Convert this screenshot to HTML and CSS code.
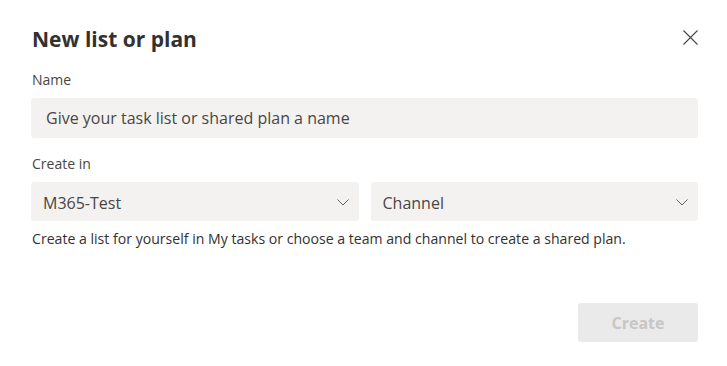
FILE: index.html
```html
<!DOCTYPE html>
<html lang="en">
<head>
<meta charset="utf-8">
<title>New list or plan</title>
<link rel="stylesheet" href="styles.css">
</head>
<body>
<div class="dialog">
  <div class="header">
    <h1 class="title">New list or plan</h1>
    <button class="close" aria-label="Close">
      <svg width="15" height="15" viewBox="0 0 15 15"><path d="M0.5 0.5 L14.5 14.5 M14.5 0.5 L0.5 14.5" stroke="#484644" stroke-width="1.1" fill="none"/></svg>
    </button>
  </div>
  <label class="label label-name">Name</label>
  <div class="input">Give your task list or shared plan a name</div>
  <label class="label label-create">Create in</label>
  <div class="selects">
    <div class="select"><span>M365-Test</span>
      <svg width="12" height="7" viewBox="0 0 12 7"><path d="M0.5 0.5 L6 6 L11.5 0.5" stroke="#616161" stroke-width="1" fill="none"/></svg>
    </div>
    <div class="select"><span>Channel</span>
      <svg width="12" height="7" viewBox="0 0 12 7"><path d="M0.5 0.5 L6 6 L11.5 0.5" stroke="#616161" stroke-width="1" fill="none"/></svg>
    </div>
  </div>
  <p class="help">Create a list for yourself in My tasks or choose a team and channel to create a shared plan.</p>
  <div class="footer">
    <button class="create" disabled>Create</button>
  </div>
</div>
</body>
</html>
```
FILE: styles.css
```css
html, body {
  margin: 0;
  background: #ffffff;
}
body {
  font-family: "Open Sans", "Noto Sans", sans-serif;
  color: #252423;
}
.dialog {
  padding: 25px 29px 0 31px;
}
.header {
  display: flex;
  justify-content: space-between;
  align-items: flex-start;
}
.title {
  margin: 0 0 0 1px;
  font-size: 21px;
  line-height: 28px;
  font-weight: 700;
  color: #323130;
}
.close {
  margin-top: 5px;
  padding: 0;
  border: 0;
  background: none;
  width: 15px;
  height: 15px;
  display: block;
}
.close svg { display: block; }
.label {
  display: block;
  font-size: 14px;
  line-height: 20px;
  color: #484644;
  margin-left: 1px;
}
.label-name { margin-top: 17px; }
.label-create { margin-top: 16px; }
.input {
  margin-top: 8px;
  height: 40px;
  box-sizing: border-box;
  background: #f3f2f1;
  border-radius: 3px;
  padding-left: 15px;
  display: flex;
  align-items: center;
  font-size: 16px;
  color: #484644;
}
.selects {
  margin-top: 8px;
  display: grid;
  grid-template-columns: 1fr 1fr;
  gap: 12px;
}
.select {
  height: 39px;
  box-sizing: border-box;
  background: #f3f2f1;
  border-radius: 3px;
  padding: 2px 10px 0 12px;
  display: flex;
  align-items: center;
  justify-content: space-between;
  font-size: 16px;
  color: #484644;
}
.select svg { display: block; }
.help {
  margin: 9px 0 0 1px;
  font-size: 14.1px;
  line-height: 18px;
  color: #323130;
}
.footer {
  display: flex;
  justify-content: flex-end;
  margin-top: 55px;
}
.create {
  width: 120px;
  height: 39px;
  border: 0;
  border-radius: 3px;
  background: #ebeaea;
  color: #c8c6c4;
  font-family: inherit;
  font-size: 16px;
  font-weight: 700;
  padding-top: 2px;
}
```
